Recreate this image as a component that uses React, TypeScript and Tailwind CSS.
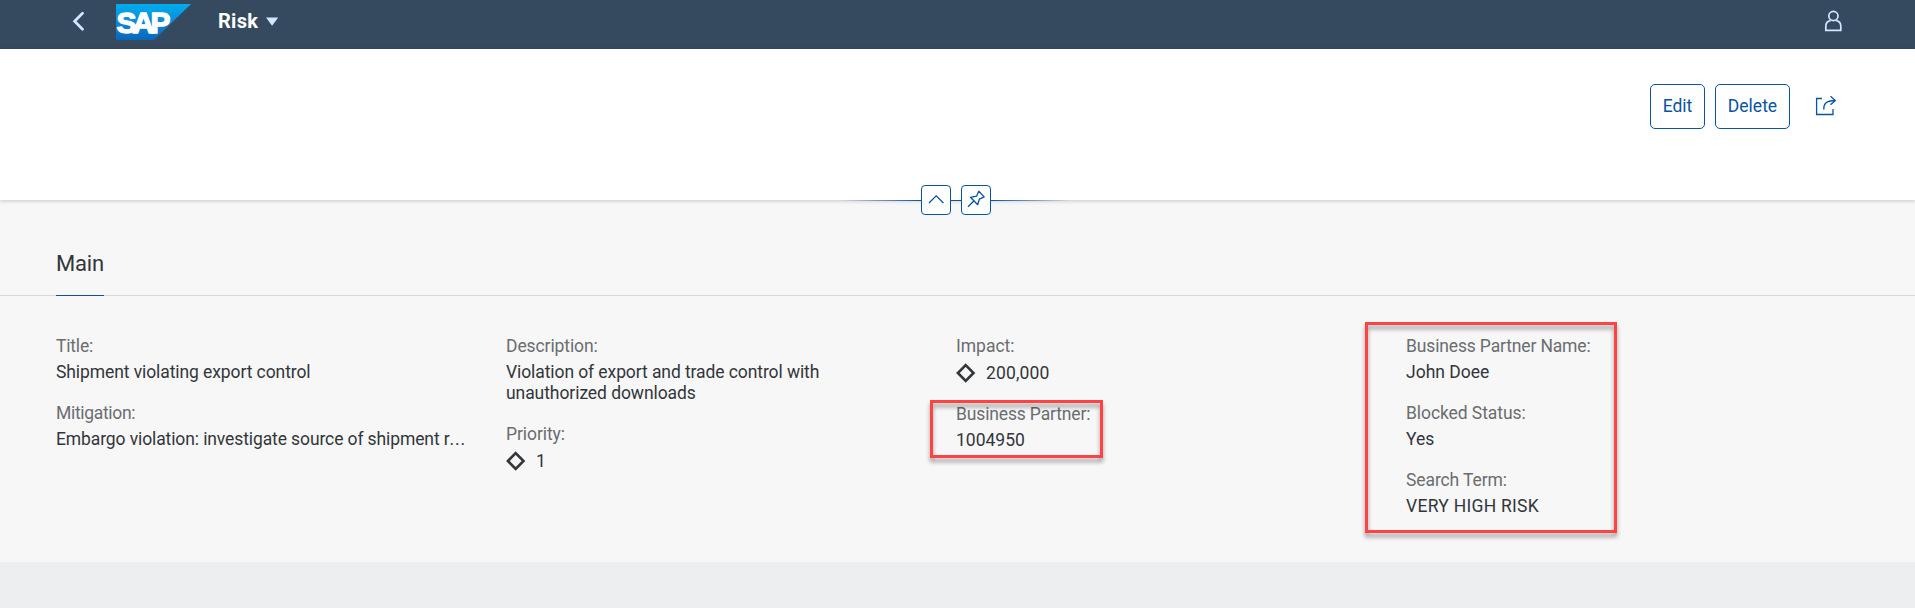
import type { ReactNode } from "react";

function Field({ label, labelClass = "", children }: { label: string; labelClass?: string; children: ReactNode }) {
  return (
    <div className="flex flex-col gap-[5px] whitespace-nowrap">
      <div className="text-[#6a6d70]"><span className={labelClass}>{label}</span></div>
      <div>{children}</div>
    </div>
  );
}

function Diamond() {
  return (
    <svg className="h-[22px] w-5" viewBox="0 0 20 22" fill="none">
      <path d="M9.7 3.2 L17.5 11 L9.7 18.8 L1.9 11 Z" stroke="#32363a" strokeWidth="2.6" />
    </svg>
  );
}

function StatusValue({ children }: { children: ReactNode }) {
  return (
    <div className="flex h-[22px] items-center gap-[10px]">
      <Diamond />
      <span className="tracking-[0.15px]">{children}</span>
    </div>
  );
}

function Highlight({ className }: { className: string }) {
  return (
    <div className={`pointer-events-none absolute border-[3px] border-[#ff4343] drop-shadow-[0_4px_2px_rgba(0,0,0,0.38)] ${className}`} />
  );
}

function SapLogo() {
  return (
    <svg className="h-9 w-[75px]" viewBox="0 0 75 36">
      <defs>
        <linearGradient id="sap" x1="0" y1="0" x2="0" y2="1">
          <stop offset="0" stopColor="#00aeef" />
          <stop offset="0.5" stopColor="#0d8ad6" />
          <stop offset="1" stopColor="#0a66b8" />
        </linearGradient>
      </defs>
      <path d="M0 0H75L38 36H0Z" fill="url(#sap)" />
      <text x="0.4" y="29" fontFamily="Liberation Sans, Arial, sans-serif" fontWeight="700" fontSize="30" letterSpacing="-3.8" fill="#fff" stroke="#fff" strokeWidth="1.3">SAP</text>
    </svg>
  );
}

export default function App() {
  return (
    <div className="flex h-[608px] w-[1915px] flex-col overflow-hidden bg-[#edeef0] font-['Roboto',sans-serif] text-[17.5px] leading-[21px] text-[#32363a]">
      <header className="flex h-[49px] shrink-0 items-start justify-between bg-[#354a5f] pr-[73px] pl-[72px]">
        <div className="flex items-start">
          <svg className="mt-[11px] h-5 w-3" viewBox="0 0 12 20" fill="none">
            <path d="M10.5 2.2L2.6 10.2L10.5 18.2" stroke="#d1e8ff" strokeWidth="2.7" strokeLinecap="round" />
          </svg>
          <div className="mt-1 ml-8"><SapLogo /></div>
          <div className="mt-[10px] ml-[27px] flex items-center gap-[7px]">
            <span className="w-[41px] text-[20px] leading-[23px] font-bold tracking-[0.3px] text-white">Risk</span>
            <svg className="h-[9px] w-[13px]" viewBox="0 0 13 9"><path d="M0 0.5H12.2L6.1 8.8Z" fill="#d1e8ff" /></svg>
          </div>
        </div>
        <svg className="mt-[10px] h-[22px] w-[18px]" viewBox="0 0 18 22" fill="none" stroke="#d1e8ff" strokeWidth="1.7">
          <circle cx="9.4" cy="6" r="4.6" />
          <path d="M6.6 10.7C3.7 11.2 1.8 13.5 1.8 16.4V20.3H16.8V16.4C16.8 13.5 15 11.2 12.2 10.7" />
        </svg>
      </header>

      <section className="relative z-10 flex h-[151px] shrink-0 items-start justify-end bg-white pt-[35px] pr-[77px] text-[#0854a0] shadow-[0_1px_4px_rgba(0,0,0,0.2)]">
        <button className="h-[45px] w-[55px] rounded-[5px] border border-[#0854a0]"><span>Edit</span></button>
        <button className="ml-[10px] h-[45px] w-[75px] rounded-[5px] border border-[#0854a0]"><span>Delete</span></button>
        <svg className="mt-[11px] ml-[25px] h-[22px] w-[23px]" viewBox="0 0 23 22" fill="none" stroke="#0854a0" strokeWidth="1.3">
          <path d="M7 3.5H1.6V19.5H18V14" />
          <path d="M8.8 14.5C8.4 8.8 11 5.7 20 5.5M15.5 1.2L20.3 5.5L15.5 9.8" />
        </svg>
        <div className="absolute top-[136px] left-[840px] flex h-[30px] w-[230px] items-center">
          <div className="h-px w-[81px] bg-gradient-to-r from-transparent to-[#0854a0]" />
          <button className="flex h-[30px] w-[30px] items-center justify-center rounded-[4px] border border-[#0854a0] bg-white">
            <svg className="h-[28px] w-[28px]" viewBox="0 0 28 28" fill="none"><path d="M7 17L14.2 9.8L21.4 17" stroke="#0854a0" strokeWidth="1.3" /></svg>
          </button>
          <div className="h-px w-[10px] bg-[#0854a0]" />
          <button className="flex h-[30px] w-[30px] items-center justify-center rounded-[4px] border border-[#0854a0] bg-white">
            <svg className="h-[28px] w-[28px]" viewBox="0 0 28 28" fill="none" stroke="#0854a0" strokeWidth="1.3">
              <path d="M16.8 5.3L22.2 10.9L17.3 13.2L15.7 18.7L8.5 11.3L14.5 10.2ZM11.8 15L6 20.8" strokeLinejoin="round" />
            </svg>
          </button>
          <div className="h-px w-[79px] bg-gradient-to-l from-transparent to-[#0854a0]" />
        </div>
      </section>

      <main className="relative h-[362px] shrink-0 bg-[#f7f7f7]">
        <div className="flex h-24 items-end border-b border-[#d9d9d9] pl-14">
          <h2 className="-mb-px h-[45px] w-12 border-b border-[#0854a0] text-[22px] leading-[26px] tracking-[-0.15px] whitespace-nowrap"><span>Main</span></h2>
        </div>
        <div className="grid grid-cols-[450px_450px_450px_450px] items-start pt-10 pl-14">
          <div className="flex flex-col gap-5">
            <Field label="Title:" labelClass="tracking-[-0.2px]"><span className="tracking-[-0.09px]">Shipment violating export control</span></Field>
            <Field label="Mitigation:" labelClass="tracking-[-0.32px]">
              <span className="tracking-[-0.11px]">Embargo violation: investigate source of shipment r<span className="tracking-[0.9px]">...</span></span>
            </Field>
          </div>
          <div className="flex flex-col gap-5">
            <Field label="Description:" labelClass="tracking-[-0.1px]">
              <span className="tracking-[-0.09px]">Violation of export and trade control with</span><br />
              <span className="tracking-[-0.07px]">unauthorized downloads</span>
            </Field>
            <Field label="Priority:" labelClass="tracking-[-0.08px]"><StatusValue>1</StatusValue></Field>
          </div>
          <div className="flex flex-col gap-5">
            <Field label="Impact:"><StatusValue>200,000</StatusValue></Field>
            <Field label="Business Partner:" labelClass="tracking-[-0.15px]"><span>1004950</span></Field>
          </div>
          <div className="flex flex-col gap-5">
            <Field label="Business Partner Name:" labelClass="tracking-[-0.15px]"><span>John Doee</span></Field>
            <Field label="Blocked Status:" labelClass="tracking-[-0.08px]"><span>Yes</span></Field>
            <Field label="Search Term:" labelClass="tracking-[-0.1px]"><span className="tracking-[0.27px]">VERY HIGH RISK</span></Field>
          </div>
        </div>
        <Highlight className="top-[200px] left-[930px] h-[58px] w-[173px]" />
        <Highlight className="top-[122px] left-[1365px] h-[211px] w-[252px]" />
      </main>
    </div>
  );
}
